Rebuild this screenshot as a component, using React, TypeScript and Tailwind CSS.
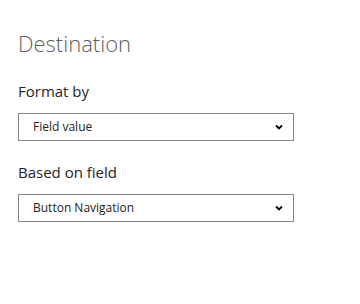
import React from "react";

const Chevron = () => (
  <svg width="8" height="6" viewBox="0 0 8 6" className="pointer-events-none absolute right-[4px] top-1/2 -translate-y-1/2 mr-[1px]">
    <path d="M1 1.5 L4 4.5 L7 1.5" fill="none" stroke="#000" strokeWidth="1.8" />
  </svg>
);

const Select = ({ value }: { value: string }) => (
  <div className="relative w-[276px] h-[28px] border border-[#8a8886] bg-white flex items-center">
    <span className="pl-[14px] text-[12px] text-[#252423]">{value}</span>
    <div className="absolute right-[5px] top-0 bottom-0 w-[10px]">
      <Chevron />
    </div>
  </div>
);

export default function App() {
  return (
    <div className="w-[360px] h-[304px] bg-white pl-[18px] pt-[28px]" style={{ fontFamily: "'Open Sans', 'Noto Sans', sans-serif" }}>
      <h2 className="text-[22px] font-light text-[#605e5c] leading-[30px]">Destination</h2>
      <div className="mt-[23px] text-[15px] text-[#252423] leading-[20px]">Format by</div>
      <div className="mt-[12px]">
        <Select value="Field value" />
      </div>
      <div className="mt-[21px] text-[15px] text-[#252423] leading-[20px]">Based on field</div>
      <div className="mt-[12px]">
        <Select value="Button Navigation" />
      </div>
    </div>
  );
}
